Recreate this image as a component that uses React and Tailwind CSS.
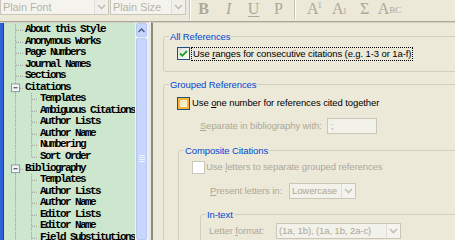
import React from 'react'

const tree = [
    { t: 'About this Style', l: 0 },
    { t: 'Anonymous Works', l: 0 },
    { t: 'Page Numbers', l: 0 },
    { t: 'Journal Names', l: 0 },
    { t: 'Sections', l: 0 },
    { t: 'Citations', l: 0, open: true },
    { t: 'Templates', l: 1 },
    { t: 'Ambiguous Citations', l: 1 },
    { t: 'Author Lists', l: 1 },
    { t: 'Author Name', l: 1 },
    { t: 'Numbering', l: 1, sel: true },
    { t: 'Sort Order', l: 1, last: true },
    { t: 'Bibliography', l: 0, open: true },
    { t: 'Templates', l: 1 },
    { t: 'Author Lists', l: 1 },
    { t: 'Author Name', l: 1 },
    { t: 'Editor Lists', l: 1 },
    { t: 'Editor Name', l: 1 },
    { t: 'Field Substitutions', l: 1 },
]

const dot = { stroke: '#9A9A9A', strokeWidth: 1, strokeDasharray: '1 1' }

function Gutter({ item }) {
    const w = item.l === 0 ? 20 : 35
    return (
        <svg width={w} viewBox={`0 0 ${w} 12`} preserveAspectRatio="none" className="h-full shrink-0">
            <line x1="11.5" y1="0" x2="11.5" y2="12" {...dot} />
            {item.l === 0 && <line x1="12" y1="6.5" x2="19" y2="6.5" {...dot} />}
            {item.l === 1 && (
                <>
                    <line x1="27.5" y1="0" x2="27.5" y2={item.last ? 6.5 : 12} {...dot} />
                    <line x1="28" y1="6.5" x2="34" y2="6.5" {...dot} />
                </>
            )}
            {item.open && (
                <>
                    <rect x="7.5" y="2" width="8" height="8" fill="#F4F4F0" stroke="#7C98B4" />
                    <line x1="9.5" y1="6" x2="13.5" y2="6" stroke="#1F2F4A" strokeWidth="1" />
                </>
            )}
        </svg>
    )
}

function Chevron() {
    return (
        <svg width="9" height="6" viewBox="0 0 9 6">
            <path d="M1 1 L4.5 4.5 L8 1" fill="none" stroke="#C2C0B4" strokeWidth="1.6" />
        </svg>
    )
}

function Combo({ text, w }) {
    return (
        <div className={`flex h-[16px] -mt-px border border-[#C9C7BA] bg-[#F4F3EE] ${w}`}>
            <span className="flex-1 pl-[2px] leading-[15px] text-[11px] text-[#B8B5A6]">{text}</span>
            <span className="w-[14px] flex items-center justify-center bg-[#F1F0EA] border-l border-[#E2E0D6]">
                <Chevron />
            </span>
        </div>
    )
}

function Toolbar() {
    const btn = "w-[25px] h-[18px] flex items-center justify-center font-['Liberation_Serif',serif] text-[16px] text-[#ACA899]"
    return (
        <div className="h-[22px] shrink-0 flex items-start border-b border-[#ACA899] shadow-[0_1px_0_#FFFFFF]">
            <Combo text="Plain Font" w="w-[109px]" />
            <div className="w-px" />
            <Combo text="Plain Size" w="w-[76px]" />
            <div className="ml-[3px] h-[19px] w-[2px] border-l border-[#C6C3B4] border-r border-r-white" />
            <div className={btn}><b>B</b></div>
            <div className={btn}><i>I</i></div>
            <div className={btn}><span className="underline underline-offset-2">U</span></div>
            <div className={btn}>P</div>
            <div className="ml-[3px] h-[19px] w-[2px] border-l border-[#C6C3B4] border-r border-r-white" />
            <div className="w-[6px]" />
            <div className={btn}>A<sup className="text-[9px] -ml-px">1</sup></div>
            <div className={btn}>A<sub className="text-[9px] -ml-px">1</sub></div>
            <div className={btn}>Σ</div>
            <div className={btn}>A<span className="text-[9px] mt-[3px]">BC</span></div>
        </div>
    )
}

function LeftPane() {
    return (
        <div className="w-[149px] shrink-0 flex border-t border-[#D4D0C8] border-r border-r-[#E6EAF4]">
            <div className="w-[3px] bg-[#2E62D9]" />
            <div className="w-px bg-[#3C3C3C]" />
            <div className="flex-1 bg-[#CDE7CE] pt-[1px] overflow-hidden font-['Liberation_Mono',monospace] font-bold text-[11px] tracking-[-1.6px] text-black">
                {tree.map((item, i) => (
                    <div key={i} className="h-[11.56px] flex items-stretch whitespace-nowrap">
                        <Gutter item={item} />
                        <span className={`leading-[11.56px] px-px ${item.sel ? 'bg-[#ECE9D8]' : ''}`}>{item.t}</span>
                    </div>
                ))}
            </div>
            <div className="w-[13px] shrink-0 flex flex-col bg-[#EEF2FC]">
                <div className="h-[14px] mx-px rounded-[2px] border border-[#B7C9F1] bg-[#C5D5FB] flex items-center justify-center">
                    <svg width="7" height="5" viewBox="0 0 7 5">
                        <path d="M0.5 4 L3.5 1 L6.5 4" fill="none" stroke="#4D6185" strokeWidth="1.5" />
                    </svg>
                </div>
                <div className="flex-1 mx-px mt-px rounded-[2px] border border-[#B7C9F1] bg-[#C6D6FC] flex flex-col items-center pt-[116px]">
                    <div className="w-[6px] h-px bg-[#EEF4FE] mb-px" />
                    <div className="w-[6px] h-px bg-[#EEF4FE] mb-px" />
                    <div className="w-[6px] h-px bg-[#EEF4FE] mb-px" />
                    <div className="w-[6px] h-px bg-[#EEF4FE]" />
                </div>
            </div>
        </div>
    )
}

function Legend({ children }) {
    return <div className="-mt-[7px] ml-[5px] px-px w-fit bg-[#ECE9D8] leading-[13px] text-[#0046D5]">{children}</div>
}

function CheckOn() {
    return (
        <div className="w-[13px] h-[13px] shrink-0 border border-[#1C5180] bg-gradient-to-br from-[#DCDCD7] to-white flex items-center justify-center">
            <svg width="9" height="9" viewBox="0 0 9 9">
                <path d="M1 4.5 L3.3 6.8 L8 2" fill="none" stroke="#21A121" strokeWidth="1.8" />
            </svg>
        </div>
    )
}

function CheckHot() {
    return (
        <div className="w-[13px] h-[13px] shrink-0 border border-[#1C5180] bg-[#F8B636] p-[2px]">
            <div className="w-full h-full bg-gradient-to-br from-[#F6E2B6] to-[#FBF3E2]" />
        </div>
    )
}

function CheckOff() {
    return <div className="w-[13px] h-[13px] shrink-0 border border-[#CAC8BB] bg-white" />
}

function Select({ text, w }) {
    return (
        <div className={`flex h-[16px] border border-[#C9C7BA] bg-[#F2F1EA] ${w}`}>
            <span className="flex-1 pl-[2px] leading-[14px] text-[#ACA899] whitespace-nowrap overflow-hidden">{text}</span>
            <span className="w-[14px] flex items-center justify-center border-l border-[#E0DED4] bg-[#F4F3EE]">
                <Chevron />
            </span>
        </div>
    )
}

function RightPane() {
    return (
        <div className="flex-1 ml-[2px] border-l-2 border-[#8E8B7E] border-t border-t-[#D4D0C8] overflow-hidden pl-[10px] pt-[13px] text-black">
            <div className="w-[320px] h-[36px] border border-[#D0D0BF] rounded-[3px]">
                <Legend>All References</Legend>
                <div className="mt-[4px] ml-[13px] flex items-center h-[13px]">
                    <CheckOn />
                    <span className="ml-px px-px border border-dotted border-black leading-[12px] whitespace-nowrap">
                        Use <span className="underline">r</span>anges for consecutive citations (e.g. 1-3 or 1a-f)
                    </span>
                </div>
            </div>

            <div className="mt-[12px] w-[320px] h-[200px] border border-[#D0D0BF] rounded-[3px]">
                <Legend>Grouped References</Legend>
                <div className="mt-[6px] ml-[13px] flex items-center h-[13px]">
                    <CheckHot />
                    <span className="ml-[2px] whitespace-nowrap">
                        Use <span className="underline">o</span>ne number for references cited together
                    </span>
                </div>
                <div className="mt-[8px] ml-[36px] flex items-center h-[16px]">
                    <span className="w-[127px] text-[#ACA899] whitespace-nowrap">
                        <span className="underline">S</span>eparate in bibliography with:
                    </span>
                    <div className="w-[50px] h-[16px] border border-[#C9C7BA] bg-[#F2F1EA] pl-[3px] leading-[14px] text-[#ACA899]">;</div>
                </div>

                <div className="mt-[16px] ml-[14px] w-[300px] h-[140px] border border-[#D0D0BF] rounded-[3px]">
                    <Legend>Composite Citations</Legend>
                    <div className="mt-[4px] ml-[13px] flex items-center h-[13px]">
                        <CheckOff />
                        <span className="ml-px text-[#ACA899] whitespace-nowrap">
                            Use <span className="underline">l</span>etters to separate grouped references
                        </span>
                    </div>
                    <div className="mt-[9px] ml-[31px] flex items-center h-[16px]">
                        <span className="w-[79px] text-[#ACA899] whitespace-nowrap">
                            <span className="underline">P</span>resent letters in:
                        </span>
                        <Select text="Lowercase" w="w-[67px]" />
                    </div>

                    <div className="mt-[15px] ml-[21px] w-[270px] h-[60px] border border-[#D0D0BF] rounded-[3px]">
                        <Legend>In-text</Legend>
                        <div className="mt-[2px] ml-[8px] flex items-center h-[16px]">
                            <span className="w-[67px] text-[#ACA899] whitespace-nowrap">
                                Letter <span className="underline">f</span>ormat:
                            </span>
                            <Select text="(1a, 1b), (1a, 1b, 2a-c)" w="w-[125px]" />
                        </div>
                    </div>
                </div>
            </div>
        </div>
    )
}

export default function App() {
    return (
        <div className="w-[455px] h-[240px] overflow-hidden bg-[#ECE9D8] flex flex-col font-['Liberation_Sans',sans-serif] text-[9.5px] tracking-[-0.1px]">
            <Toolbar />
            <div className="flex flex-1 min-h-0">
                <LeftPane />
                <RightPane />
            </div>
        </div>
    )
}
